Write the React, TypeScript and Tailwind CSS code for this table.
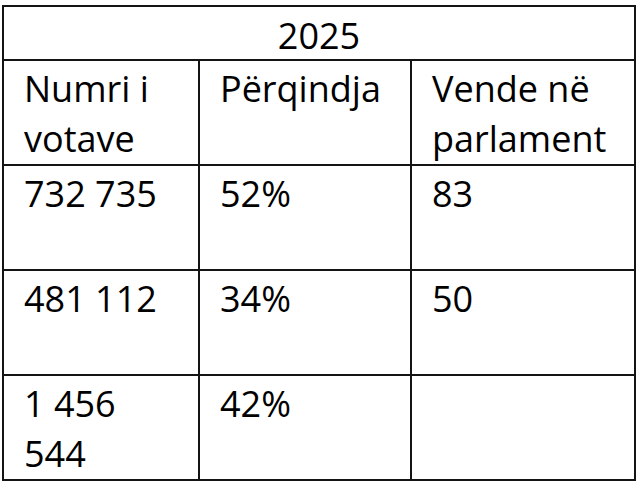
const ROWS: string[][] = [
  ["Numri i votave", "Përqindja", "Vende në parlament"],
  ["732 735", "52%", "83"],
  ["481 112", "34%", "50"],
  ["1 456 544", "42%", ""],
];

export default function App() {
  return (
    <div
      className="min-h-[487px] w-[640px] bg-white pt-[5px] pl-[2px] text-black"
      style={{ fontFamily: "'Open Sans', 'Liberation Sans', sans-serif" }}
    >
      <div className="w-[634px] border-2 border-[#141414]">
        <div className="flex h-[54px] justify-center border-b-2 border-[#141414] pt-[4px] text-[36px] leading-[50px]">
          2025
        </div>
        {ROWS.map((row, i) => (
          <div
            key={i}
            className={
              i === ROWS.length - 1
                ? "grid h-[103px] grid-cols-[196px_212px_1fr]"
                : "grid h-[105px] grid-cols-[196px_212px_1fr] border-b-2 border-[#141414]"
            }
          >
            {row.map((cell, j) => (
              <div
                key={j}
                className={
                  j === row.length - 1
                    ? "pt-[3px] pl-[20px] pr-1 text-[36px] leading-[50px]"
                    : "border-r-2 border-[#141414] pt-[3px] pl-[20px] pr-[20px] text-[36px] leading-[50px]"
                }
              >
                {cell}
              </div>
            ))}
          </div>
        ))}
      </div>
    </div>
  );
}
